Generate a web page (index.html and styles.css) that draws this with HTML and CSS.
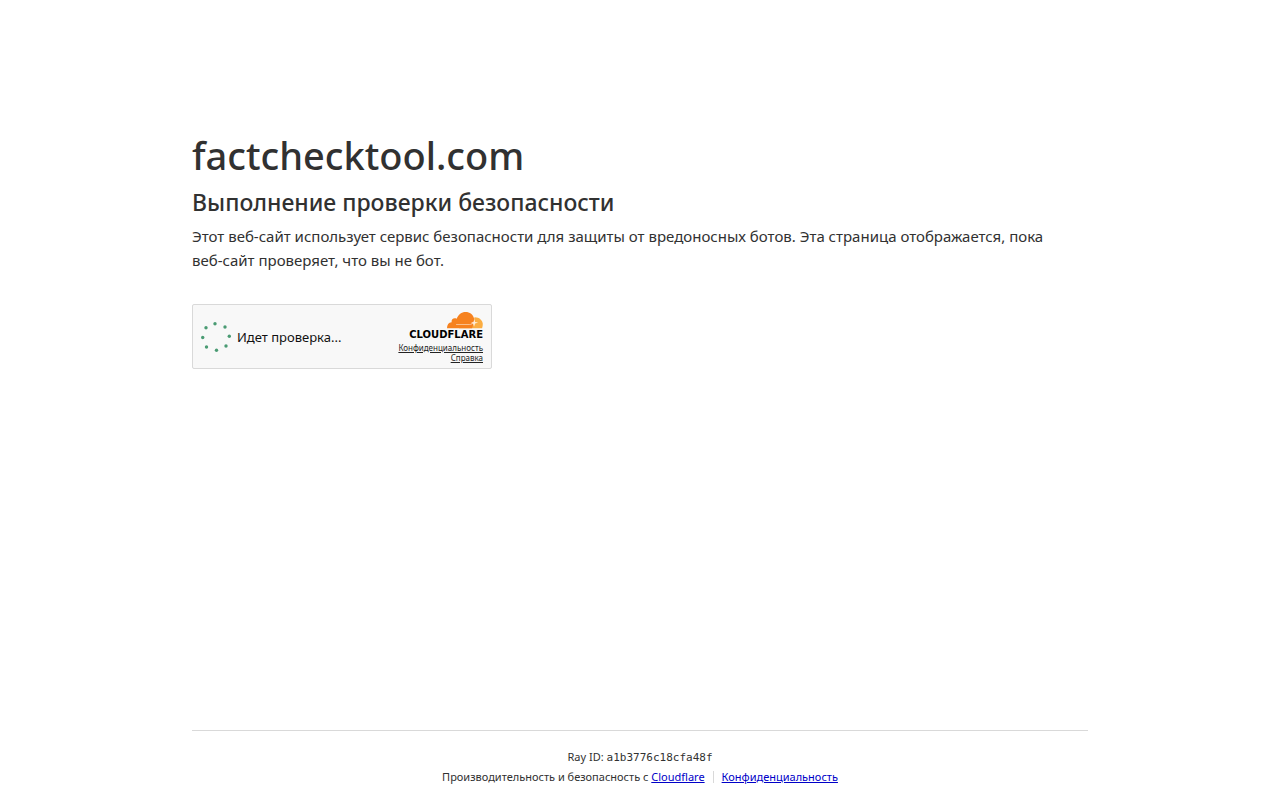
FILE: index.html
```html
<!DOCTYPE html>
<html lang="ru">
<head>
    <meta charset="UTF-8">
    <meta name="viewport" content="width=device-width, initial-scale=1">
    <title>factchecktool.com</title>
    <link rel="stylesheet" href="styles.css">
</head>
<body>
    <main class="main-content">
        <h1 class="host">factchecktool.com</h1>
        <h2 class="title">Выполнение проверки безопасности</h2>
        <p class="description">Этот веб-сайт использует сервис безопасности для защиты от вредоносных ботов. Эта страница отображается, пока <span class="nowrap">веб-сайт</span> проверяет, что вы не бот.</p>

        <div class="widget">
            <div class="status" role="status">
                <svg class="spinner" viewBox="0 0 30 30" fill="#4a9b73" aria-hidden="true">
                    <circle cx="14" cy="1.7" r="1.7"/>
                    <circle cx="24" cy="5" r="1.7"/>
                    <circle cx="28.3" cy="14.3" r="1.7"/>
                    <circle cx="25" cy="24" r="1.7"/>
                    <circle cx="15.5" cy="28.3" r="1.7"/>
                    <circle cx="5.5" cy="25" r="1.7"/>
                    <circle cx="1.7" cy="15.5" r="1.7"/>
                    <circle cx="5" cy="5.7" r="1.7"/>
                </svg>
                <span>Идет проверка...</span>
            </div>
            <div class="branding">
                <svg class="cloud" viewBox="0 0 36 17" aria-hidden="true">
                    <path fill="#fbad41" d="M27.500 5.200c4.500-.2 8 2.800 8.300 6.600 0 1.600-.2 3.100-.7 4.500H12V14l14-1z"/>
                    <path fill="#f6821f" d="M0 16.300c0-3.500 1.500-5.600 4.600-6-.4-3 2.200-4.900 5.100-3.500C11.300 2.400 14.600 0 18.500 0c4.300 0 7.700 2.600 8.800 7l.2 2.400c-.1 1.500-.7 3.100-1.500 4.200l-1 2.700z"/>
                    <path fill="none" stroke="#fcd9b8" stroke-width=".7" stroke-linecap="round" d="M9.500 12.500h13.300c1.500 0 2.200-.4 2.800-1.700"/>
                    <path fill="#fff" d="m27.500 6.800.6 3.100 3 .6-3 1.100-1 3-1.100-2.800-2.200-.9 2.600-1z" opacity=".8"/>
                </svg>
                <span class="wordmark">CLOUDFLARE</span>
                <a class="widget-link" href="#privacy">Конфиденциальность</a>
                <a class="widget-link" href="#help">Справка</a>
            </div>
        </div>
    </main>

    <footer class="footer">
        <div>Ray ID: <code class="ray">a1b3776c18cfa48f</code></div>
        <div class="footer-row">
            <span>Производительность и безопасность с <a href="#cloudflare">Cloudflare</a></span>
            <span class="divider"></span>
            <a href="#privacy">Конфиденциальность</a>
        </div>
    </footer>
</body>
</html>
```
FILE: styles.css
```css
* {
    box-sizing: border-box;
}
body {
    margin: 0;
    min-height: 100vh;
    display: flex;
    flex-direction: column;
    align-items: center;
    background: #fff;
    color: #313131;
    font-family: "Noto Sans", sans-serif;
}
.main-content {
    width: 70%;
    flex: 1;
    padding-top: 127px;
}
.host {
    margin: 0;
    font-size: 38px;
    line-height: 56px;
    font-weight: 500;
}
.title {
    margin: 0;
    font-size: 23px;
    line-height: 38px;
    font-weight: 500;
}
.description {
    margin: 3px 0 32px;
    font-size: 15px;
    line-height: 24px;
}
.nowrap {
    white-space: nowrap;
}
.widget {
    display: flex;
    align-items: center;
    justify-content: space-between;
    width: 300px;
    max-width: 100%;
    min-height: 65px;
    padding: 0 8px;
    border: 1px solid #d9d9d9;
    border-radius: 2px;
    background: #f8f8f8;
}
.status {
    display: flex;
    align-items: center;
    gap: 6px;
    font-size: 13px;
    color: #111;
}
.spinner {
    width: 30px;
    height: 30px;
}
.branding {
    display: flex;
    flex-direction: column;
    align-items: flex-end;
    padding-top: 1px;
}
.cloud {
    width: 36px;
    height: 17px;
}
.wordmark {
    font-family: "DejaVu Sans", sans-serif;
    font-size: 10px;
    line-height: 12px;
    font-weight: 700;
    color: #000;
    margin-bottom: 2px;
}
.widget-link {
    font-size: 8px;
    line-height: 10px;
    color: #232323;
}
.footer {
    width: 70%;
    padding: 16px 0 14px;
    border-top: 1px solid #d9d9d9;
    font-size: 11px;
    line-height: 19px;
    text-align: center;
}
.footer a {
    color: #0000c8;
}
.ray {
    font-family: "DejaVu Sans Mono", monospace;
    font-size: 11px;
}
.footer-row {
    display: flex;
    align-items: center;
    justify-content: center;
    gap: 8px;
}
.divider {
    width: 1px;
    height: 12px;
    background: #d9d9d9;
}
```
